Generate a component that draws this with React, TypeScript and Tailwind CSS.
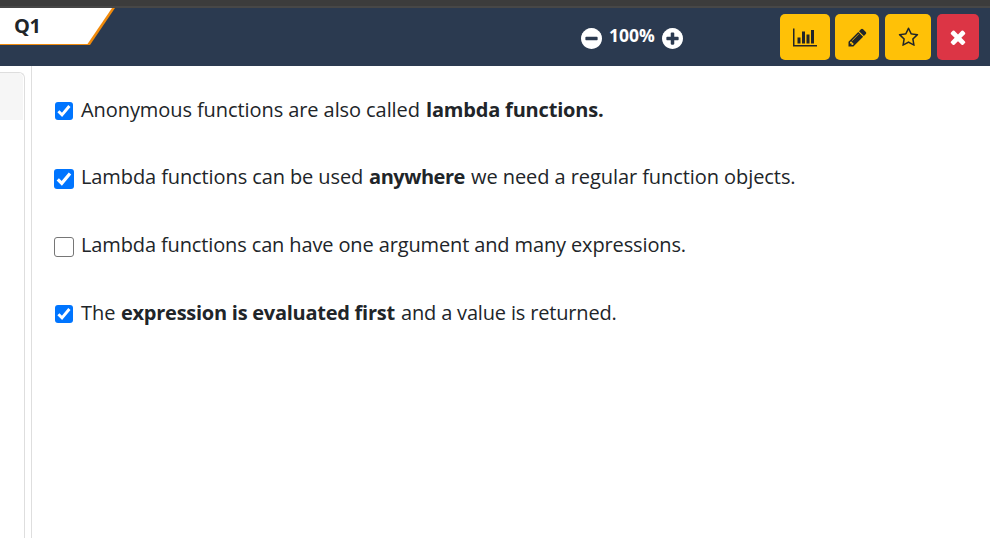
import React from "react";

type Segment = { text: string; bold?: boolean; className: string };
type Option = { checked: boolean; box: string; row: string; segments: Segment[] };

const options: Option[] = [
  {
    checked: true,
    box: "ml-[55px] mr-[8px] mt-[9px] size-[18px]",
    row: "h-[67px]",
    segments: [
      { text: "Anonymous functions are also called", className: "w-[345px] tracking-[-0.08px]" },
      { text: "lambda functions.", bold: true, className: "w-[180px] tracking-[-0.19px]" },
    ],
  },
  {
    checked: true,
    box: "ml-[54px] mr-[7px] mt-[9px] size-[20px]",
    row: "h-[68px]",
    segments: [
      { text: "Lambda functions can be used", className: "w-[288px] tracking-[-0.1px]" },
      { text: "anywhere", bold: true, className: "w-[102px] tracking-[-0.45px]" },
      { text: "we need a regular function objects.", className: "w-[330px] tracking-[-0.07px]" },
    ],
  },
  {
    checked: false,
    box: "ml-[54px] mr-[7px] mt-[9px] size-[20px]",
    row: "h-[68px]",
    segments: [
      {
        text: "Lambda functions can have one argument and many expressions.",
        className: "w-[620px] tracking-[-0.13px]",
      },
    ],
  },
  {
    checked: true,
    box: "ml-[55px] mr-[8px] mt-[9px] size-[18px]",
    row: "h-[68px]",
    segments: [
      { text: "The", className: "w-[40px]" },
      { text: "expression is evaluated first", bold: true, className: "w-[280px] tracking-[-0.26px]" },
      { text: "and a value is returned.", className: "w-[230px] tracking-[-0.17px]" },
    ],
  },
];

const circle =
  "M1664 896q0 209-103 385.500t-279.500 279.500-385.500 103-385.500-103-279.500-279.500-103-385.500 103-385.500 279.500-279.500 385.500-103 385.500 103 279.500 279.500 103 385.500z";
const minusPath =
  "M1344 960v-128q0-26-19-45t-45-19h-768q-26 0-45 19t-19 45v128q0 26 19 45t45 19h768q26 0 45-19t19-45z";
const plusPath =
  "M1344 960v-128q0-26-19-45t-45-19h-256v-256q0-26-19-45t-45-19h-128q-26 0-45 19t-19 45v256h-256q-26 0-45 19t-19 45v128q0 26 19 45t45 19h256v256q0 26 19 45t45 19h128q26 0 45-19t19-45v-256h256q26 0 45-19t19-45z";
const chartPath =
  "M640 896v512h-256v-512h256zm384-512v1024h-256v-1024h256zm1024 1152v128h-2048v-1536h128v1408h1920zm-640-896v768h-256v-768h256zm384-384v1152h-256v-1152h256z";
const pencilPath =
  "M491 1536l91-91-235-235-91 91v107h128v128h107zm523-928q0-22-22-22-10 0-17 7l-542 542q-7 7-7 17 0 22 22 22 10 0 17-7l542-542q7-7 7-17zm-54-192l416 416-832 832h-416v-416zm683 96q0 53-37 90l-166 166-416-416 166-165q36-38 90-38 53 0 91 38l235 234q37 39 37 91z";
const starPath =
  "M1201 1004l306-297-422-62-189-382-189 382-422 62 306 297-73 421 378-199 377 199zm527-357q0 22-26 48l-363 354 86 500q1 7 1 20 0 50-41 50-19 0-40-12l-449-236-449 236q-22 12-40 12-21 0-31.500-14.500t-10.500-35.500q0-6 2-20l86-500-364-354q-25-27-25-48 0-37 56-46l502-73 225-455q19-41 49-41t49 41l225 455 502 73q56 9 56 46z";
const timesPath =
  "M1490 1322q0 40-28 68l-136 136q-28 28-68 28t-68-28l-294-294-294 294q-28 28-68 28t-68-28l-136-136q-28-28-28-68t28-68l294-294-294-294q-28-28-28-68t28-68l136-136q28-28 68-28t68 28l294 294 294-294q28-28 68-28t68 28l136 136q28 28 28 68t-28 68l-294 294 294 294q28 28 28 68z";

function Zoom({ path, className }: { path: string; className: string }) {
  return (
    <svg viewBox="128 128 1536 1536" className={`size-[21px] shrink-0 ${className}`}>
      <path d={circle} fill="#fff" />
      <path d={path} fill="#2b3a50" />
    </svg>
  );
}

function Check({ checked, className }: { checked: boolean; className: string }) {
  return (
    <span
      className={`shrink-0 rounded-[3px] ${checked ? "bg-[#0075ff]" : "border-[1.5px] border-[#767676] bg-white"} ${className}`}
    >
      {checked && (
        <svg viewBox="0 0 18 18" className="size-full" fill="none" stroke="#fff" strokeWidth="2.9">
          <path d="M3.4 9.3 7 12.900 14.4 4" />
        </svg>
      )}
    </span>
  );
}

export default function App() {
  return (
    <div className="flex h-[538px] w-[990px] flex-col overflow-hidden bg-white font-['Open_Sans','Noto_Sans',sans-serif] text-[#212529]">
      <div className="h-[8px] shrink-0 border-b-2 border-[#474747] bg-[#3c3c3c]" />
      <header className="flex h-[58px] shrink-0 items-start bg-[#2b3a50]">
        <div className="grid h-[37px] w-[116px] shrink-0">
          <svg viewBox="0 0 116 37" className="col-start-1 row-start-1 h-[37px] w-[116px]">
            <path d="M0 0H115L90 37H0Z" fill="#f08a0c" />
            <path d="M0 0H112L87.500 36H0Z" fill="#fff" />
          </svg>
          <span className="col-start-1 row-start-1 pl-[14px] pt-[4px] text-[20px] font-bold leading-[28px] tracking-[-0.3px]">
            Q1
          </span>
        </div>
        <Zoom path={minusPath} className="ml-[465px] mt-[20px]" />
        <span className="ml-[7px] mt-[13px] w-[47px] shrink-0 whitespace-nowrap text-[17.500px] font-bold leading-[28px] text-white">
          100%
        </span>
        <Zoom path={plusPath} className="ml-[6px] mt-[20px]" />
        <div className="ml-[97px] mt-[6px] flex h-[46px]">
          <button className="mr-[5px] w-[50px] rounded-[5px] bg-[#ffc107] pl-[13px]">
            <svg viewBox="0 0 2048 1792" className="mt-[1px] h-[21px] w-[24px]" fill="#212529"><path d={chartPath} /></svg>
          </button>
          <button className="mr-[6px] w-[44px] rounded-[5px] bg-[#ffc107] pl-[12px]">
            <svg viewBox="0 0 1792 1792" className="size-[21px]" fill="#212529"><path d={pencilPath} /></svg>
          </button>
          <button className="mr-[6px] w-[46px] rounded-[5px] bg-[#ffc107] pl-[12.500px]">
            <svg viewBox="0 0 1792 1792" className="size-[21px]" fill="#212529"><path d={starPath} /></svg>
          </button>
          <button className="w-[42px] rounded-[5px] bg-[#dc3545] pl-[10px]">
            <svg viewBox="0 0 1792 1792" className="size-[22px]" fill="#fff"><path d={timesPath} /></svg>
          </button>
        </div>
      </header>
      <div className="flex min-h-0 flex-1">
        <aside className="w-[32px] shrink-0 border-r border-[#dedede] pt-[6px]">
          <div className="h-full w-[25px] rounded-tr-[6px] border-r border-t border-[#dedede] pr-px">
            <div className="h-[47px] rounded-tr-[5px] bg-[#f6f6f6]" />
          </div>
        </aside>
        <main className="-ml-[32px] flex-1 pt-[27px]">
          {options.map((o, i) => (
            <div key={i} className={`flex items-start ${o.row}`}>
              <Check checked={o.checked} className={o.box} />
              {o.segments.map((s) => (
                <span
                  key={s.text}
                  className={`shrink-0 whitespace-nowrap text-[20px] leading-[34px] ${s.bold ? "font-bold" : ""} ${s.className}`}
                >
                  {s.text}{" "}
                </span>
              ))}
            </div>
          ))}
        </main>
      </div>
    </div>
  );
}
